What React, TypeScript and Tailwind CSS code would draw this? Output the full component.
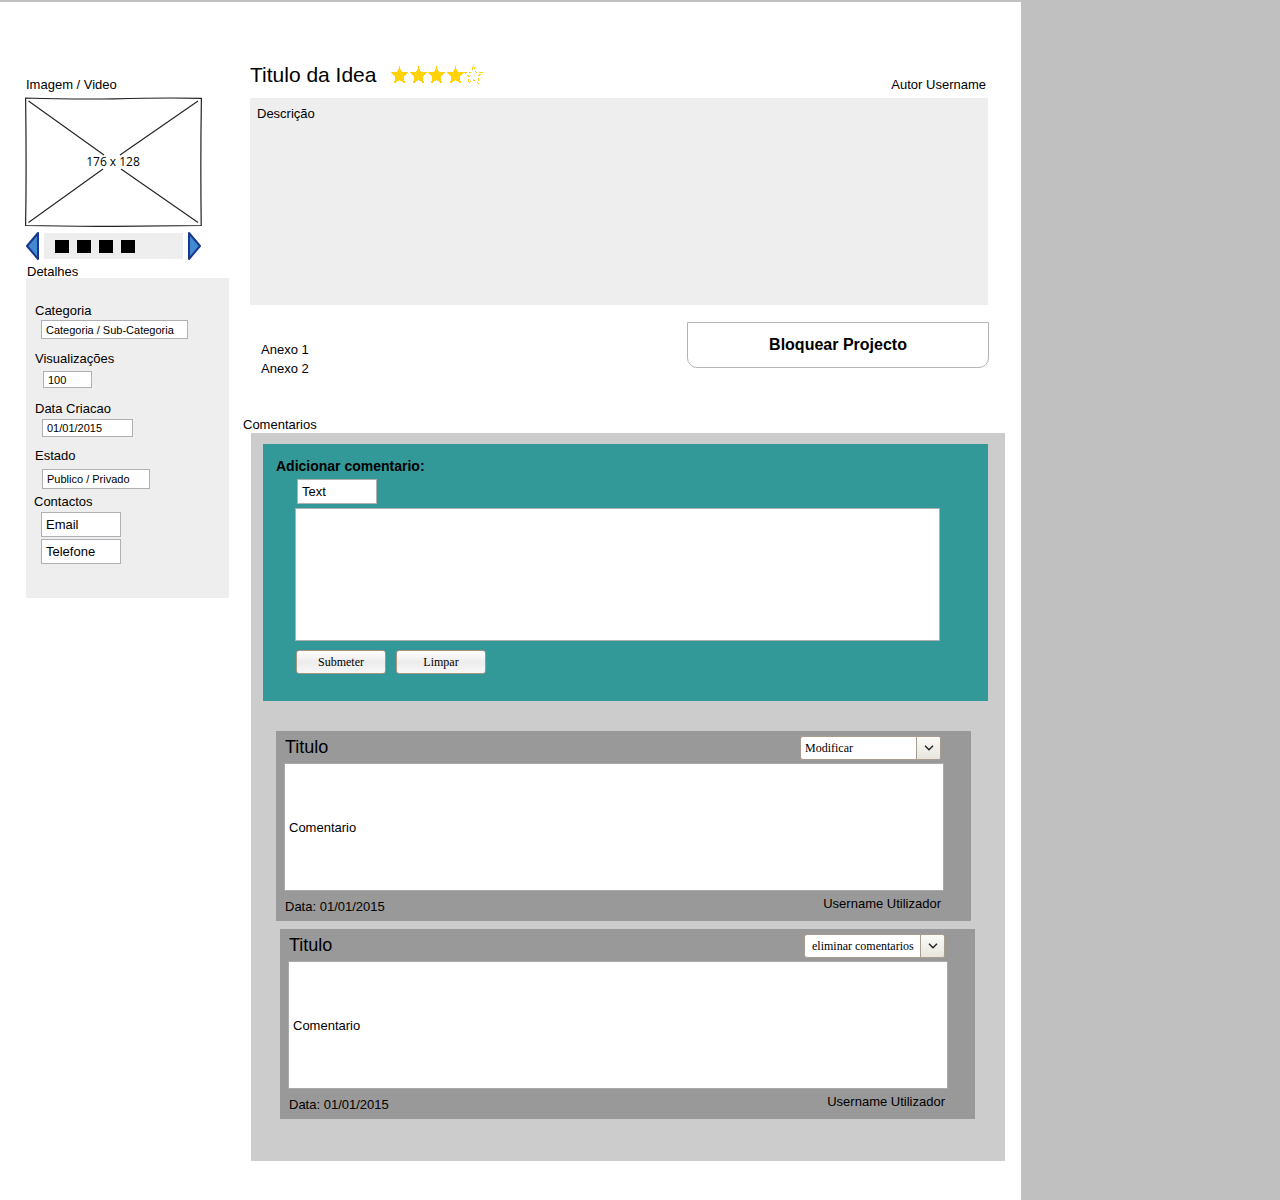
import type { ReactNode } from 'react';

const STAR = 'M9.5 1 L11.8 7 L18 7.5 L13.8 11.5 L15 18.5 L9.5 15 L4 18.5 L5.2 11.5 L1 7.5 L7.2 7 Z';

function Rating() {
  return (
    <svg role="img" aria-label="4 de 5 estrelas" width="96" height="20" viewBox="0 0 96 20" shapeRendering="crispEdges">
      {[0, 19, 37, 56].map((x) => (
        <path key={x} d={STAR} transform={`translate(${x} 0)`} fill="#ffd20a" />
      ))}
      <path d={STAR} transform="translate(74 0)" fill="none" stroke="#ffd20a" strokeWidth="1" strokeDasharray="3 2" />
    </svg>
  );
}

function ImagePlaceholder() {
  return (
    <svg role="img" aria-label="Imagem 176 x 128" className="mt-1 block" width="178" height="130" viewBox="0 0 178 130" fill="none">
      <path d="M.6 1 Q50 2.5 89 1.8 Q140 .5 176.4 1.3 Q175.4 60 176.2 128.5 Q120 129 89 129.3 Q40 129.5 .6 128.5 Q1.6 70 .6 1 Z" stroke="#222" strokeWidth="1.2" />
      <path d="M3.5 4 L79 58 M95 58 L173 4 M3.5 125.5 L78 72 M96 72 L173 125.5" stroke="#222" strokeWidth="1.1" />
      <text x="88" y="69" textAnchor="middle" fill="#000" fontSize="12" className="font-['Open_Sans',sans-serif]">
        176 x 128
      </text>
    </svg>
  );
}

function Arrow({ label, d }: { label: string; d: string }) {
  return (
    <button type="button" aria-label={label}>
      <svg width="14" height="28" viewBox="0 0 14 28" className="block">
        <path d={d} fill="#4189d0" stroke="#19388a" strokeWidth="2" strokeLinejoin="round" />
      </svg>
    </button>
  );
}

function Field({ id, label, className, children }: { id: string; label: string; className: string; children: ReactNode }) {
  return (
    <div className={className}>
      <label htmlFor={id} className="block">
        {label}
      </label>
      {children}
    </div>
  );
}

function Comment({ id, action, options, className, selectClass }: { id: string; action: string; options: string[]; className: string; selectClass: string }) {
  return (
    <article className={`bg-[#999] pt-[5px] pr-[27px] pb-[6px] pl-2 ${className}`}>
      <header className="flex h-[27px] items-start justify-between pr-[3px] pl-px">
        <h3 className="text-lg leading-[22px]">Titulo</h3>
        <div className="relative">
          <select
            aria-label="Acção"
            defaultValue={action}
            className={`h-6 w-[141px] appearance-none rounded-[3px] border border-[#a89c8e] bg-white font-['Liberation_Serif',serif] text-xs ${selectClass}`}
          >
            {options.map((o) => (
              <option key={o}>{o}</option>
            ))}
          </select>
          <span className="pointer-events-none absolute top-px right-px flex h-[22px] w-6 items-center justify-center rounded-r-[2px] border-l border-[#a89c8e] bg-linear-to-b from-[#fafaf8] to-[#e8e6dd]">
            <svg width="10" height="6" viewBox="0 0 10 6" fill="none" stroke="#222" strokeWidth="1.4">
              <path d="M1 .8 L5 4.8 L9 .8" />
            </svg>
          </span>
        </div>
      </header>
      <input
        id={id}
        aria-label="Comentario"
        defaultValue="Comentario"
        className="block h-32 w-full border border-[#a9a9ab] bg-white px-1"
      />
      <footer className="flex items-start justify-between pt-[5px] pr-[3px] pl-px">
        <time dateTime="2015-01-01" className="pt-[3px]">
          Data: 01/01/2015
        </time>
        <span>Username Utilizador</span>
      </footer>
    </article>
  );
}

const BOX = 'block border border-[#b0b0b4] bg-white px-1';
const SMALL = `${BOX} text-[11px]`;
const FORM_BUTTON =
  "h-6 w-[90px] rounded-[3px] border border-[#a8937f] bg-linear-to-b from-white via-[#ececec] to-[#f8f8f8] font-['Liberation_Serif',serif] text-xs";

export default function App() {
  return (
    <div className="min-h-screen bg-[#c0c0c0] pt-[2px] pr-[259px] font-['Liberation_Sans',Arial,sans-serif] text-[13px] leading-4 text-black">
      <main className="flex min-h-[calc(100vh-2px)] items-start gap-5 bg-white pr-4 pb-[39px] pl-[25px]">
        <aside className="w-[204px] shrink-0 pt-[75px]">
          <h2 className="pl-px">Imagem / Video</h2>
          <ImagePlaceholder />
          <div className="mt-[5px] flex w-44 items-center justify-between">
            <Arrow label="Anterior" d="M13 1 V27 L2 14 Z" />
            <div className="ml-px flex h-[26px] w-[139px] items-center gap-2 bg-[#eee] px-[11px]">
              {[1, 2, 3, 4].map((n) => (
                <button key={n} type="button" aria-label={`Imagem ${n}`} className="h-[13px] w-[14px] bg-black" />
              ))}
            </div>
            <Arrow label="Seguinte" d="M2 1 V27 L13 14 Z" />
          </div>
          <h2 className="mt-1 h-[14px] pl-[2px]">Detalhes</h2>
          <section className="ml-px bg-[#eee] pt-[25px] pb-[34px] pl-[9px]">
            <Field id="categoria" label="Categoria" className="h-12">
              <input id="categoria" defaultValue="Categoria / Sub-Categoria" className={`${SMALL} mt-px ml-[6px] h-[19px] w-[147px]`} />
            </Field>
            <Field id="visualizacoes" label="Visualizações" className="h-[50px]">
              <input id="visualizacoes" defaultValue="100" className={`${SMALL} mt-1 ml-2 h-[17px] w-[49px]`} />
            </Field>
            <Field id="data" label="Data Criacao" className="h-[47px]">
              <input id="data" defaultValue="01/01/2015" className={`${SMALL} mt-[2px] ml-[7px] h-[18px] w-[91px]`} />
            </Field>
            <Field id="estado" label="Estado" className="h-[46px]">
              <input id="estado" defaultValue="Publico / Privado" className={`${SMALL} mt-[5px] ml-[7px] h-5 w-[108px]`} />
            </Field>
            <Field id="email" label="Contactos" className="-ml-px">
              <input id="email" defaultValue="Email" className={`${BOX} mt-[2px] ml-[7px] h-[25px] w-20`} />
              <input aria-label="Telefone" defaultValue="Telefone" className={`${BOX} mt-[2px] ml-[7px] h-[25px] w-20`} />
            </Field>
          </section>
        </aside>

        <div className="min-w-0 flex-1 pt-[61px]">
          <header className="mr-[19px] ml-px flex h-[35px] items-start">
            <h1 className="text-[21px] leading-6">Titulo da Idea</h1>
            <div className="ml-[14px] pt-[2px]">
              <Rating />
            </div>
            <span className="ml-auto pt-[14px]">Autor Username</span>
          </header>
          <section className="mr-[17px] ml-px h-[207px] bg-[#eee] px-[7px] pt-2">Descrição</section>
          <div className="mt-[17px] mr-4 flex items-start justify-between pl-3">
            <ul className="pt-[18px] leading-[19px]">
              <li>
                <a href="#anexo-1">Anexo 1</a>
              </li>
              <li>
                <a href="#anexo-2">Anexo 2</a>
              </li>
            </ul>
            <button type="button" className="h-[46px] w-[302px] rounded-b-[10px] border border-[#b4b4b4] bg-white text-base font-bold">
              Bloquear Projecto
            </button>
          </div>

          <h2 className="mt-[39px] -ml-[6px] h-4">Comentarios</h2>
          <section className="ml-[2px] bg-[#ccc] pt-[11px] pb-[42px]">
            <form className="mr-[17px] ml-3 bg-[#339998] pt-[14px] pr-12 pb-[27px] pl-8" onSubmit={(e) => e.preventDefault()}>
              <label htmlFor="titulo" className="-ml-[19px] block text-sm leading-4 font-bold">
                Adicionar comentario:
              </label>
              <input id="titulo" defaultValue="Text" className={`${BOX} mt-[5px] ml-[2px] h-[25px] w-20`} />
              <textarea aria-label="Comentario" className={`${BOX} mt-1 h-[133px] w-full resize-none`} />
              <div className="mt-[9px] ml-px flex gap-[10px]">
                <button type="submit" className={FORM_BUTTON}>
                  Submeter
                </button>
                <button type="reset" className={FORM_BUTTON}>
                  Limpar
                </button>
              </div>
            </form>
            <Comment id="c1" action="Modificar" options={['Modificar', 'eliminar comentarios']} className="mt-[30px] mr-[34px] ml-[25px]" selectClass="pl-1" />
            <Comment id="c2" action="eliminar comentarios" options={['Modificar', 'eliminar comentarios']} className="mt-2 mr-[30px] ml-[29px]" selectClass="pl-[7px]" />
          </section>
        </div>
      </main>
    </div>
  );
}
